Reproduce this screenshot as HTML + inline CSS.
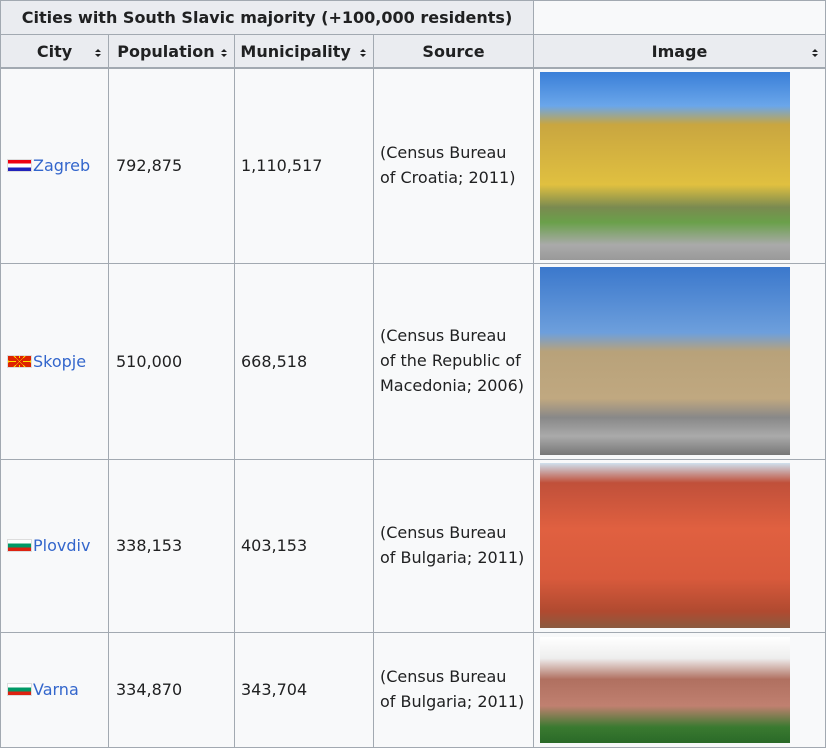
<!DOCTYPE html>
<html><head><meta charset="utf-8"><style>
*{margin:0;padding:0;box-sizing:border-box}
body{width:826px;height:747px;background:#fff;font-family:"DejaVu Sans",sans-serif;font-size:16px;color:#202122;position:relative;overflow:hidden}
.c{position:absolute;background:#f8f9fa;border:1px solid #a2a9b1}
.h{background:#eaecf0;font-weight:bold;display:flex;align-items:center;justify-content:center}
.t{position:absolute;white-space:nowrap;line-height:25px}
a{color:#3366cc;text-decoration:none}
.s{position:absolute;top:13px;width:8px;height:10px}
.fl{display:inline-block;width:25px;height:13px;vertical-align:-1px;border:1px solid #ddd;margin-right:1px}
.im{position:absolute;left:540px;width:250px}
</style></head><body>
<div class="c h" style="left:0;top:0;width:534px;height:35px">Cities with South Slavic majority (+100,000 residents)</div>
<div class="c" style="left:533px;top:0;width:293px;height:35px"></div>
<div class="c h" style="left:0;top:34px;width:109px;height:35px;border-bottom:2px solid #a2a9b1">City<svg class="s" style="left:93px" viewBox="0 0 8 10"><path d="M1 4L4 1L7 4ZM1 6L4 9L7 6Z" fill="#202122"/></svg></div>
<div class="c h" style="left:108px;top:34px;width:127px;height:35px;border-bottom:2px solid #a2a9b1">&nbsp;Population&nbsp;&nbsp;&nbsp;<svg class="s" style="left:111px" viewBox="0 0 8 10"><path d="M1 4L4 1L7 4ZM1 6L4 9L7 6Z" fill="#202122"/></svg></div>
<div class="c h" style="left:234px;top:34px;width:140px;height:35px;border-bottom:2px solid #a2a9b1">Municipality&nbsp;&nbsp;&nbsp;<svg class="s" style="left:124px" viewBox="0 0 8 10"><path d="M1 4L4 1L7 4ZM1 6L4 9L7 6Z" fill="#202122"/></svg></div>
<div class="c h" style="left:373px;top:34px;width:161px;height:35px;border-bottom:2px solid #a2a9b1">Source</div>
<div class="c h" style="left:533px;top:34px;width:293px;height:35px;border-bottom:2px solid #a2a9b1">Image<svg class="s" style="left:277px" viewBox="0 0 8 10"><path d="M1 4L4 1L7 4ZM1 6L4 9L7 6Z" fill="#202122"/></svg></div>

<div class="c" style="left:0;top:68px;width:109px;height:196px"></div>
<div class="c" style="left:108px;top:68px;width:127px;height:196px"></div>
<div class="c" style="left:234px;top:68px;width:140px;height:196px"></div>
<div class="c" style="left:373px;top:68px;width:161px;height:196px"></div>
<div class="c" style="left:533px;top:68px;width:293px;height:196px"></div>
<div class="c" style="left:0;top:263px;width:109px;height:197px"></div>
<div class="c" style="left:108px;top:263px;width:127px;height:197px"></div>
<div class="c" style="left:234px;top:263px;width:140px;height:197px"></div>
<div class="c" style="left:373px;top:263px;width:161px;height:197px"></div>
<div class="c" style="left:533px;top:263px;width:293px;height:197px"></div>
<div class="c" style="left:0;top:459px;width:109px;height:174px"></div>
<div class="c" style="left:108px;top:459px;width:127px;height:174px"></div>
<div class="c" style="left:234px;top:459px;width:140px;height:174px"></div>
<div class="c" style="left:373px;top:459px;width:161px;height:174px"></div>
<div class="c" style="left:533px;top:459px;width:293px;height:174px"></div>
<div class="c" style="left:0;top:632px;width:109px;height:116px"></div>
<div class="c" style="left:108px;top:632px;width:127px;height:116px"></div>
<div class="c" style="left:234px;top:632px;width:140px;height:116px"></div>
<div class="c" style="left:373px;top:632px;width:161px;height:116px"></div>
<div class="c" style="left:533px;top:632px;width:293px;height:116px"></div>

<div class="t" style="left:7px;top:153px"><span class="fl" style="background:linear-gradient(#e01 0 33%,#fff 33% 66%,#22b 66%)"></span><a>Zagreb</a></div>
<div class="t" style="left:116px;top:153px">792,875</div>
<div class="t" style="left:241px;top:153px">1,110,517</div>
<div class="t" style="left:380px;top:140px">(Census Bureau<br>of Croatia; 2011)</div>

<div class="t" style="left:7px;top:349px"><span class="fl" style="background:repeating-conic-gradient(from -4deg at 50% 50%,#fd0 0 8deg,#d20 8deg 45deg)"></span><a>Skopje</a></div>
<div class="t" style="left:116px;top:349px">510,000</div>
<div class="t" style="left:241px;top:349px">668,518</div>
<div class="t" style="left:380px;top:323px">(Census Bureau<br>of the Republic of<br>Macedonia; 2006)</div>

<div class="t" style="left:7px;top:533px"><span class="fl" style="background:linear-gradient(#fff 0 33%,#096 33% 66%,#d21 66%)"></span><a>Plovdiv</a></div>
<div class="t" style="left:116px;top:533px">338,153</div>
<div class="t" style="left:241px;top:533px">403,153</div>
<div class="t" style="left:380px;top:520px">(Census Bureau<br>of Bulgaria; 2011)</div>

<div class="t" style="left:7px;top:677px"><span class="fl" style="background:linear-gradient(#fff 0 33%,#096 33% 66%,#d21 66%)"></span><a>Varna</a></div>
<div class="t" style="left:116px;top:677px">334,870</div>
<div class="t" style="left:241px;top:677px">343,704</div>
<div class="t" style="left:380px;top:664px">(Census Bureau<br>of Bulgaria; 2011)</div>

<div class="im" style="top:72px;height:188px;background:linear-gradient(#3a7fd8 0,#6aa6ea 18%,#c9a640 28%,#e0c040 60%,#7a8a50 72%,#6aa04a 80%,#aaa 92%,#999 100%)"></div>
<div class="im" style="top:267px;height:188px;background:linear-gradient(#3b78cc 0,#6d9fdc 35%,#b8a27a 45%,#c0a880 70%,#888 80%,#aaa 90%,#777 100%)"></div>
<div class="im" style="top:463px;height:165px;background:linear-gradient(#cfe0ee 0,#c0503a 12%,#e06040 40%,#d85a3c 70%,#b04a30 90%,#8a5a40 100%)"></div>
<div class="im" style="top:637px;height:106px;background:linear-gradient(#fff 0,#eee 20%,#b07060 40%,#c08070 65%,#3a7a30 85%,#2a6a28 100%)"></div>
</body></html>
